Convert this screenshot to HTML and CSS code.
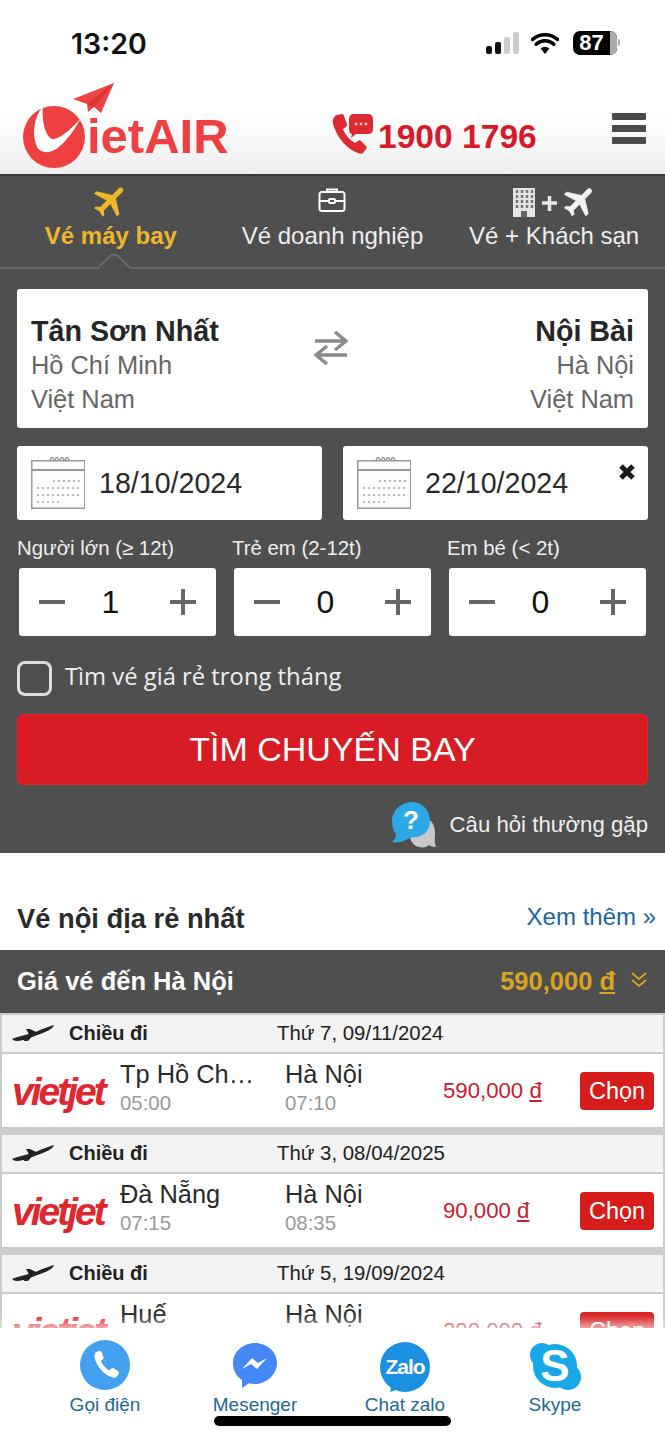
FILE: index.html
```html
<!DOCTYPE html>
<html lang="vi">
<head>
<meta charset="utf-8">
<title>VietAIR</title>
<link rel="stylesheet" href="styles.css">
</head>
<body>
<div class="page">
  <div class="status">
    <span class="time">13:20</span>
    <div class="status-icons">
      <svg class="signal" viewBox="487 33 33 22" width="33" height="22"><rect x="487" y="47" width="6" height="8" rx="2" fill="#111"/><rect x="496" y="43" width="6" height="12" rx="2" fill="#111"/><rect x="505" y="38" width="6" height="17" rx="2" fill="#ccc"/><rect x="514" y="33" width="6" height="22" rx="2" fill="#ccc"/></svg>
      <svg class="wifi" viewBox="0 0 28 22" width="28" height="22"><path d="M14 22 9.600 16.600a7 7 0 0 1 8.800 0z" fill="#000"/><path d="M5.200 12.200a13 13 0 0 1 17.600 0M1.500 7.400a19 19 0 0 1 25 0" fill="none" stroke="#000" stroke-width="3.600" stroke-linecap="round"/></svg>
      <div class="battery"><span class="battery-fill">87</span><span class="battery-rest"></span></div>
      <span class="battery-nub"></span>
    </div>
  </div>

  <header class="site-header">
    <svg class="logo" viewBox="20 82 212 92" width="212" height="92">
      <path d="M114 83 73 99l14 5 1 8 6-5 7 6z" fill="#ee4444"/>
      <path d="M114 83 87 104l7 3z" fill="#d83434"/>
      <circle cx="54" cy="137" r="31" fill="#ee4040"/>
      <path d="M43 106C33 118 32 136 37 147c4 7 15 7 23-1 8-7 15-17 21-28-8 9-18 19-27 21-6 1-13-13-11-33z" fill="#fff"/>
      <text class="logo-text" x="87" y="153">ietAIR</text>
    </svg>
    <div class="hotline">
      <svg class="hotline-icon" viewBox="332 112 42 44" width="42" height="44">
        <path d="M337 115l5-1c1 0 2 1 2 2l3 8c0 1 0 2-1 3l-3 2c2 6 7 11 12 14l3-2c1-1 2-1 3 0l5 5c1 1 1 2 0 3l-3 4c-1 1-3 1-5 0-11-4-21-15-25-29-1-4 1-8 4-9z" fill="#dd2a32"/>
        <path d="M353 114h15c3 0 5 2 5 5v10c0 3-2 5-5 5h-12l-5 4 1-4c-2 0-3-2-3-5v-10c0-3 2-5 4-5z" fill="#dd2a32"/>
        <circle cx="356" cy="124" r="1.400" fill="#f8c4c4"/><circle cx="361" cy="124" r="1.400" fill="#f8c4c4"/><circle cx="366" cy="124" r="1.400" fill="#f8c4c4"/>
      </svg>
      <span class="hotline-number">1900 1796</span>
    </div>
    <div class="menu"><span></span><span></span><span></span></div>
  </header>

  <main class="panel">
    <nav class="tabs">
      <div class="tab tab-active">
        <svg class="tab-icon" viewBox="1.500 1.500 21 21" width="36" height="36"><path transform="rotate(45 12 12)" d="M21 16v-2l-8-5V3.500c0-.83-.67-1.500-1.500-1.500S10 2.670 10 3.500V9l-8 5v2l8-2.500V19l-2 1.500V22l3.500-1 3.500 1v-1.500L13 19v-5.500l8 2.500z" fill="#edb82c"/></svg>
        <span>Vé máy bay</span>
      </div>
      <div class="tab">
        <svg class="tab-icon" viewBox="0 0 36 36" width="36" height="36"><g fill="none" stroke="#fff" stroke-width="2"><rect x="5.500" y="9" width="25" height="19" rx="2.500"/><path d="M13 9V6.500h10V9M5.500 18h9M21.500 18h9"/><rect x="15" y="16" width="6" height="4" rx="1"/></g></svg>
        <span>Vé doanh nghiệp</span>
      </div>
      <div class="tab">
        <svg class="tab-icon" viewBox="0 0 90 36" width="90" height="36">
          <rect x="4" y="5" width="22" height="29" fill="#e4e4e4"/>
          <g fill="none" stroke="#777" stroke-width="2.500" stroke-dasharray="3 2"><path d="M8 7v20M13 7v20M18 7v20M23 7v20"/></g>
          <rect x="12" y="28" width="6" height="6" fill="#666"/>
          <path d="M33 20h15M40.500 13v15" stroke="#e8e8e8" stroke-width="3.500"/>
          <path transform="translate(52 -1) scale(1.600) rotate(45 12 12)" d="M21 16v-2l-8-5V3.500c0-.83-.67-1.500-1.500-1.500S10 2.670 10 3.500V9l-8 5v2l8-2.500V19l-2 1.500V22l3.500-1 3.500 1v-1.500L13 19v-5.500l8 2.500z" fill="#f2f2f2" stroke="#f2f2f2" stroke-width=".5"/>
        </svg>
        <span>Vé + Khách sạn</span>
      </div>
      <svg class="notch" viewBox="0 0 44 16" width="44" height="16"><path d="M0 15h6L17 4c3-3 7-3 10 0l11 11h6" fill="none" stroke="#686868" stroke-width="2"/></svg>
    </nav>

    <form class="search">
      <div class="route">
        <div class="place">
          <strong>Tân Sơn Nhất</strong>
          <span>Hồ Chí Minh</span>
          <span>Việt Nam</span>
        </div>
        <svg class="swap" viewBox="0 0 34 34" width="34" height="34"><path d="M1 10h30M21 1l11 9-11 9M33 24H3M13 15 2 24l11 9" fill="none" stroke="#8b8b8b" stroke-width="3.500"/></svg>
        <div class="place place-right">
          <strong>Nội Bài</strong>
          <span>Hà Nội</span>
          <span>Việt Nam</span>
        </div>
      </div>

      <div class="dates">
        <div class="date">
          <svg class="cal" viewBox="0 0 54 52" width="54" height="52"><g fill="none" stroke="#999" stroke-width="1.500"><rect x=".75" y="3.750" width="53" height="47.500" fill="#fdfdfd"/><path d="M1 13h52" stroke-width="2"/><path d="M19 4c1-5 3-5 4 0M24 4c1-5 3-5 4 0M29 4c1-5 3-5 4 0M34 4c1-5 3-5 4 0"/></g><g stroke="#bbb" stroke-width="2" stroke-dasharray="2 3"><path d="M22 24h28M6 31h44M6 38h44M6 45h22"/></g></svg>
          <span class="date-text">18/10/2024</span>
        </div>
        <div class="date">
          <svg class="cal" viewBox="0 0 54 52" width="54" height="52"><g fill="none" stroke="#999" stroke-width="1.500"><rect x=".75" y="3.750" width="53" height="47.500" fill="#fdfdfd"/><path d="M1 13h52" stroke-width="2"/><path d="M19 4c1-5 3-5 4 0M24 4c1-5 3-5 4 0M29 4c1-5 3-5 4 0M34 4c1-5 3-5 4 0"/></g><g stroke="#bbb" stroke-width="2" stroke-dasharray="2 3"><path d="M22 24h28M6 31h44M6 38h44M6 45h22"/></g></svg>
          <span class="date-text">22/10/2024</span>
          <svg class="clear" viewBox="0 0 18 18" width="18" height="18"><path d="M3 3l12 12M15 3 3 15" stroke="#1a1a1a" stroke-width="5"/></svg>
        </div>
      </div>

      <div class="pax">
        <div class="pax-item">
          <label class="pax-label">Người lớn (≥ 12t)</label>
          <div class="counter"><i class="minus"></i><b>1</b><i class="plus"></i></div>
        </div>
        <div class="pax-item">
          <label class="pax-label">Trẻ em (2-12t)</label>
          <div class="counter"><i class="minus"></i><b>0</b><i class="plus"></i></div>
        </div>
        <div class="pax-item">
          <label class="pax-label">Em bé (&lt; 2t)</label>
          <div class="counter"><i class="minus"></i><b>0</b><i class="plus"></i></div>
        </div>
      </div>

      <div class="month"><span class="checkbox"></span><span class="month-text">Tìm vé giá rẻ trong tháng</span></div>

      <button class="submit" type="button">TÌM CHUYẾN BAY</button>

      <div class="faq">
        <svg class="faq-icon" viewBox="0 0 44 46" width="44" height="46">
          <path d="M18 16h14c7 0 11 7 11 15 0 5-1 8 1 14-3 0-6-1-7-2-2 2-6 3-10 2-5-1-9-5-9-12z" fill="#c9c9c9"/>
          <path d="M20 0c11 0 18 9 18 19 0 9-6 16-15 16-3 0-6 1-9 3-4 2-9 3-14 2 3-2 4-5 4-8-3-4-4-8-4-13C0 9 9 0 20 0z" fill="#2aa9e6"/>
          <text class="faq-mark" x="19" y="27">?</text>
        </svg>
        <span class="faq-text">Câu hỏi thường gặp</span>
      </div>
    </form>
  </main>

  <section class="deals">
    <div class="deals-head">
      <h2>Vé nội địa rẻ nhất</h2>
      <a class="more">Xem thêm »</a>
    </div>
    <div class="dest">
      <span class="dest-name">Giá vé đến Hà Nội</span>
      <span class="dest-price">590,000 <u>đ</u></span>
      <svg class="dest-chev" viewBox="0 0 16 15" width="16" height="15"><path d="M1 1l7 6 7-6M1 8l7 6 7-6" fill="none" stroke="#d9a520" stroke-width="1.800"/></svg>
    </div>

    <div class="flights">
      <article class="flight">
        <div class="flight-head">
          <svg class="fplane" viewBox="0 0 42 18" width="42" height="18"><path d="M0 14C6 11 20 9 28 5 33 3 38 1 42 0c-1 4-8 7-14 9L15 14C9 16 2 17 0 14z" fill="#222"/><path d="M14 4h4l8 4-8 3zM13 12l9-3-6 7h-4z" fill="#222"/></svg>
          <strong>Chiều đi</strong>
          <span class="flight-date">Thứ 7, 09/11/2024</span>
        </div>
        <div class="flight-body">
          <span class="airline">vietjet</span>
          <div class="leg"><span class="city">Tp Hồ Ch…</span><span class="hour">05:00</span></div>
          <div class="leg"><span class="city">Hà Nội</span><span class="hour">07:10</span></div>
          <span class="fare">590,000 <u>đ</u></span>
          <span class="pick">Chọn</span>
        </div>
      </article>
      <article class="flight">
        <div class="flight-head">
          <svg class="fplane" viewBox="0 0 42 18" width="42" height="18"><path d="M0 14C6 11 20 9 28 5 33 3 38 1 42 0c-1 4-8 7-14 9L15 14C9 16 2 17 0 14z" fill="#222"/><path d="M14 4h4l8 4-8 3zM13 12l9-3-6 7h-4z" fill="#222"/></svg>
          <strong>Chiều đi</strong>
          <span class="flight-date">Thứ 3, 08/04/2025</span>
        </div>
        <div class="flight-body">
          <span class="airline">vietjet</span>
          <div class="leg"><span class="city">Đà Nẵng</span><span class="hour">07:15</span></div>
          <div class="leg"><span class="city">Hà Nội</span><span class="hour">08:35</span></div>
          <span class="fare">90,000 <u>đ</u></span>
          <span class="pick">Chọn</span>
        </div>
      </article>
      <article class="flight">
        <div class="flight-head">
          <svg class="fplane" viewBox="0 0 42 18" width="42" height="18"><path d="M0 14C6 11 20 9 28 5 33 3 38 1 42 0c-1 4-8 7-14 9L15 14C9 16 2 17 0 14z" fill="#222"/><path d="M14 4h4l8 4-8 3zM13 12l9-3-6 7h-4z" fill="#222"/></svg>
          <strong>Chiều đi</strong>
          <span class="flight-date">Thứ 5, 19/09/2024</span>
        </div>
        <div class="flight-body">
          <span class="airline">vietjet</span>
          <div class="leg"><span class="city">Huế</span><span class="hour hour-hidden">07:00</span></div>
          <div class="leg"><span class="city">Hà Nội</span><span class="hour hour-hidden">08:10</span></div>
          <span class="fare">290,000 <u>đ</u></span>
          <span class="pick">Chọn</span>
        </div>
      </article>
    </div>
  </section>

  <footer class="bottom">
    <div class="bottom-item">
      <svg viewBox="0 0 54 54" width="54" height="54"><ellipse cx="27" cy="27" rx="25" ry="25" fill="#439ff0"/><path d="M18 14l3-1c1-.5 2 0 2.500 1l2 5c.3 1 0 2-.7 2.500l-2 1.500c1.500 3.500 5 7.500 8.500 9.500l2-2c.7-.7 1.700-.8 2.500-.3l4.500 3c.8.6 1 1.600.5 2.500l-1.800 2.800c-.8 1-2 1.500-3.500 1.200-9-2-17.500-11.500-19-20.700-.2-2 .5-4 1.500-5z" fill="#fff"/></svg>
      <span>Gọi điện</span>
    </div>
    <div class="bottom-item">
      <svg viewBox="0 0 54 54" width="54" height="54"><path d="M27 5c12 0 22 9 22 20S39 46 27 46c-2 0-4-.3-6-.8L14 50v-8C8 38 5 32 5 25 5 14 15 5 27 5z" fill="#4587f5"/><path d="M14 31l10-11 6 5 9-5-10 11-6-5z" fill="#fff"/></svg>
      <span>Mesenger</span>
    </div>
    <div class="bottom-item">
      <svg viewBox="0 0 54 54" width="54" height="54"><circle cx="27" cy="29" r="25" fill="#1b8fe0"/><path d="M14 46l-2 8 12-4z" fill="#1b8fe0"/><text class="zalo-mark" x="27" y="36">Zalo</text></svg>
      <span>Chat zalo</span>
    </div>
    <div class="bottom-item">
      <svg viewBox="0 0 54 54" width="54" height="54"><circle cx="27" cy="28" r="22" fill="#18a8ea"/><circle cx="14" cy="17" r="12" fill="#18a8ea"/><circle cx="40" cy="39" r="13" fill="#18a8ea"/><text class="skype-mark" x="27" y="43">S</text></svg>
      <span>Skype</span>
    </div>
  </footer>
  <div class="home-bar"></div>
</div>
</body>
</html>
```

FILE: styles.css
```css
* { box-sizing: border-box; }
html, body { margin: 0; padding: 0; }
body { font-family: "Liberation Sans", Arial, sans-serif; background: #fff; color: #222; }
.page { position: relative; width: 665px; height: 1440px; overflow: hidden; background: #fff; }

/* status bar */
.status { height: 82px; display: flex; justify-content: space-between; padding: 25px 45px 0 71px; }
.time { font-family: Inter, "Liberation Sans", sans-serif; font-weight: 600; font-size: 28.500px; line-height: 38px; color: #111; }
.status-icons { display: flex; align-items: flex-start; padding-top: 7px; }
.signal { margin-right: 12px; }
.wifi { margin-right: 14px; }
.battery { width: 44px; height: 24px; border-radius: 7px; overflow: hidden; display: flex; background: #000; margin-top: -1px; }
.battery-fill { flex: 1; text-align: center; color: #fff; font-weight: 700; font-size: 22px; line-height: 24px; }
.battery-rest { width: 7px; background: #aaa; }
.battery-nub { width: 2px; height: 7px; margin: 7px 0 0 1px; background: #aaa; border-radius: 0 2px 2px 0; }

/* header */
.site-header { height: 94px; display: flex; padding-left: 20px; background: linear-gradient(#fff 35%, #efefef 98%); border-bottom: 2px solid #3a3a3a; }
.logo { flex: none; }
.logo-text { font-family: "Liberation Sans", sans-serif; font-weight: 700; font-size: 49px; fill: #ee4040; }
.hotline { display: flex; margin-left: 100px; padding-top: 30px; }
.hotline-icon { margin-right: 4px; }
.hotline-number { font-weight: 700; font-size: 33.600px; line-height: 48px; color: #d7192a; padding-top: 1px; }
.menu { margin-left: auto; margin-right: 19px; padding-top: 31px; display: flex; flex-direction: column; gap: 5.500px; }
.menu span { display: block; width: 34px; height: 6.500px; background: #4a4a4a; border-radius: 1px; }

/* panel */
.panel { height: 677px; background: #4f4f4f; }
.tabs { position: relative; height: 93px; display: grid; grid-template-columns: repeat(3, 1fr); border-bottom: 2px solid #686868; }
.tab { display: flex; flex-direction: column; align-items: center; padding-top: 7px; color: #eee; font-size: 24px; line-height: 34px; white-space: nowrap; }
.tab-icon { display: block; flex: none; }
.tab-active { color: #edb82c; font-weight: 700; }
.notch { position: absolute; left: 92px; top: 77px; background: #4f4f4f; }

.search { display: flex; flex-direction: column; padding: 20px 17px 0; }
.route { height: 139px; display: flex; justify-content: space-between; align-items: flex-start; background: #fff; border-radius: 3px; padding: 25px 14px 0; }
.place { display: flex; flex-direction: column; font-size: 25.400px; line-height: 34px; color: #666; width: 218px; }
.place strong { font-size: 28.700px; color: #262626; }
.place-right { text-align: right; width: 222px; }
.swap { margin-top: 17px; flex: none; }

.dates { display: grid; grid-template-columns: 305px 305px; gap: 21px; margin-top: 18px; }
.date { position: relative; height: 74px; display: flex; align-items: center; gap: 14px; padding-left: 14px; background: #fff; border-radius: 3px; }
.cal { flex: none; }
.date-text { font-size: 28.600px; color: #2a2a2a; }
.clear { position: absolute; right: 12px; top: 17px; }

.pax { display: grid; grid-template-columns: repeat(3, 197px); column-gap: 18px; margin-top: 13px; }
.pax-item { padding-left: 2px; width: 199px; margin-right: -2px; }
.pax-label { display: block; margin-left: -2px; font-size: 20.400px; line-height: 30px; color: #eee; white-space: nowrap; }
.counter { height: 68px; margin-top: 5px; width: 197px; display: flex; align-items: center; justify-content: space-between; padding: 0 20px; background: #fff; border-radius: 3px; }
.counter b { font-weight: 400; font-size: 32px; color: #111; margin-right: 14px; }
.minus, .plus { position: relative; display: block; width: 26px; height: 26px; }
.minus::before, .plus::before { content: ""; position: absolute; left: 0; right: 0; top: 11px; height: 4px; background: #666; }
.plus::after { content: ""; position: absolute; top: 0; bottom: 0; left: 11px; width: 4px; background: #666; }

.month { display: flex; align-items: center; margin-top: 23px; gap: 13px; }
.checkbox { width: 35px; height: 35px; border: 3px solid #ddd; border-radius: 8px; }
.month-text { font-family: "Open Sans", sans-serif; font-size: 23.800px; line-height: 34px; color: #eee; padding-bottom: 4px; }

.submit { margin-top: 17px; height: 71px; border: 1px solid #e22; border-radius: 6px; background: #d71c26; color: #fff; font-family: "Liberation Sans", sans-serif; font-size: 34px; padding: 0; }

.faq { display: flex; justify-content: flex-end; align-items: center; gap: 14px; margin-top: 17px; }
.faq-icon { flex: none; }
.faq-mark { font-family: "Liberation Sans", sans-serif; font-weight: 700; font-size: 26px; fill: #fff; text-anchor: middle; }
.faq-text { font-size: 22.200px; color: #eee; }

/* deals */
.deals-head { height: 97px; display: flex; justify-content: space-between; align-items: flex-start; padding: 49px 9px 0 17px; }
.deals-head h2 { margin: 0; font-size: 27.300px; line-height: 34px; font-weight: 700; color: #2a2a2a; }
.more { font-size: 24px; line-height: 32px; color: #1b669f; margin-top: -1px; }

.dest { height: 63px; display: flex; align-items: center; padding: 0 18px 0 17px; background: #4f4f4f; color: #fff; font-size: 25.500px; font-weight: 700; }
.dest-name { flex: 1; }
.dest-price { color: #d9a520; font-size: 25.500px; }
.dest-chev { margin-left: 16px; margin-bottom: 4px; }

.flights { padding: 2px 2px 0; background: #cbcbcb; }
.flight { margin-bottom: 8px; }
.flight-head { height: 37px; display: flex; align-items: center; padding-left: 10px; background: #f3f3f3; font-size: 20px; color: #222; margin-bottom: 2px; }
.fplane { flex: none; margin-right: 15px; }
.flight-head strong { width: 208px; flex: none; }
.flight-date { font-size: 20.400px; }
.flight-body { height: 73px; display: flex; align-items: center; background: #fff; }
.airline { flex: none; width: 118px; padding-left: 10px; font-size: 39px; line-height: 50px; font-weight: 700; font-style: italic; letter-spacing: -3px; color: #e0262e; margin-top: 3px; }
.leg { flex: none; width: 166px; padding-bottom: 8px; display: flex; flex-direction: column; }
.leg + .leg { margin-left: -1px; }
.city { font-size: 25.400px; line-height: 32px; color: #2a2a2a; white-space: nowrap; }
.hour { font-size: 20.400px; line-height: 26px; color: #999; }
.hour-hidden { visibility: hidden; }
.fare { flex: none; width: 137px; margin-left: -8px; font-size: 22.200px; color: #c8202f; }
.pick { flex: none; width: 74px; height: 38px; border-radius: 4px; background: #d71c1c; color: #fff; font-size: 23.500px; line-height: 38px; text-align: center; }

/* bottom bar */
.bottom { position: absolute; left: 0; right: 0; top: 1328px; height: 112px; display: grid; grid-template-columns: repeat(4, 150px); padding-left: 30px; background: #fff; box-shadow: 0 -6px 10px rgba(255, 255, 255, .65); }
.bottom-item { display: flex; flex-direction: column; align-items: center; padding-top: 10px; font-size: 19px; line-height: 26px; color: #1f6a90; }
.bottom-item svg { display: block; flex: none; }
.zalo-mark { font-family: "Liberation Sans", sans-serif; font-weight: 700; font-size: 21px; fill: #fff; text-anchor: middle; letter-spacing: -1px; }
.skype-mark { font-family: "Liberation Sans", sans-serif; font-weight: 700; font-size: 44px; fill: #fff; text-anchor: middle; }
.home-bar { position: absolute; left: 214px; top: 1416px; width: 237px; height: 10px; background: #000; border-radius: 5px; }
```
